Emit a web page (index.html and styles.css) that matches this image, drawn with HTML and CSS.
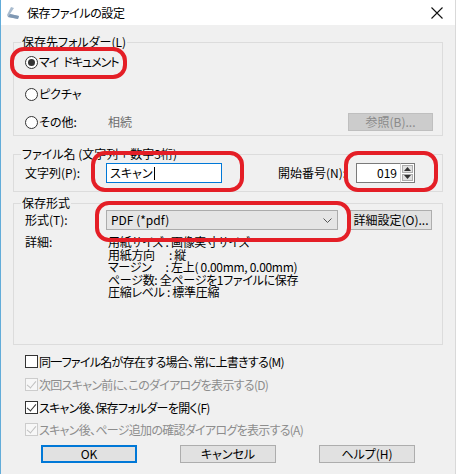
FILE: index.html
```html
<!DOCTYPE html>
<html lang="ja">
<head>
<meta charset="utf-8">
<title>保存ファイルの設定</title>
<link rel="stylesheet" href="styles.css">
</head>
<body>
<div class="window">
  <div class="titlebar">
    <svg class="app-icon" width="14" height="14" viewBox="0 0 14 14">
      <path d="M5 1 L8 2 L4 8 L13 10 L12 13 L2 11 L1 9 Z" fill="#a9bccf"/>
      <path d="M4 8 L13 10 L12 13 L2 11 Z" fill="#7f98b3"/>
    </svg>
    <span class="title">保存ファイルの設定</span>
    <svg class="close" width="12" height="12" viewBox="0 0 12 12">
      <path d="M0.5 0.5 L11.5 11.5 M11.5 0.5 L0.5 11.5" stroke="#111" stroke-width="1.1"/>
    </svg>
  </div>

  <div class="content">
    <fieldset class="group g1">
      <legend>保存先フォルダー(L)</legend>
      <div class="row r1"><span class="radio checked"></span><span class="mydoc">マイ<span class="gap"></span>ドキュメント</span></div>
      <div class="row r2"><span class="radio"></span><span>ピクチャ</span></div>
      <div class="row r3">
        <span class="radio"></span><span class="other">その他:</span><span class="path">相続</span>
        <span class="btn disabled browse">参照(B)...</span>
      </div>
    </fieldset>

    <fieldset class="group g2">
      <legend>ファイル名 (文字列 + 数字3桁)</legend>
      <div class="row">
        <span class="lbl">文字列(P):</span>
        <span class="textbox focused">スキャン<span class="caret"></span></span>
        <span class="lbl lbl-start">開始番号(N):</span>
        <span class="spin">
          <span class="spin-input">019</span>
          <span class="spin-btns">
            <span class="spin-btn"><svg width="7" height="4" viewBox="0 0 7 4"><path d="M0 4 L3.5 0 L7 4 Z" fill="#333"/></svg></span>
            <span class="spin-btn"><svg width="7" height="4" viewBox="0 0 7 4"><path d="M0 0 L3.5 4 L7 0 Z" fill="#333"/></svg></span>
          </span>
        </span>
      </div>
    </fieldset>

    <fieldset class="group g3">
      <legend>保存形式</legend>
      <div class="row">
        <span class="lbl">形式(T):</span>
        <span class="select">
          <span>PDF (*pdf)</span>
          <svg width="9" height="5" viewBox="0 0 9 5"><path d="M0.5 0.5 L4.5 4.5 L8.5 0.5" fill="none" stroke="#555" stroke-width="1"/></svg>
        </span>
        <span class="btn detail-btn">詳細設定(O)...</span>
      </div>
      <div class="details">
        <span class="lbl dlbl">詳細:</span>
        <div class="lines">
          <div>用紙サイズ : 画像実寸サイズ</div>
          <div>用紙方向　 : 縦</div>
          <div>マージン　 : 左上( 0.00mm, 0.00mm)</div>
          <div>ページ数: 全ページを1ファイルに保存</div>
          <div>圧縮レベル : 標準圧縮</div>
        </div>
      </div>
    </fieldset>

    <div class="checks">
      <div class="crow c1"><span class="check"></span><span>同一ファイル名が存在する場合、常に上書きする(M)</span></div>
      <div class="crow c2 dis"><span class="check on"></span><span>次回スキャン前に、このダイアログを表示する(D)</span></div>
      <div class="crow c3"><span class="check on"></span><span>スキャン後、保存フォルダーを開く(F)</span></div>
      <div class="crow c4 dis"><span class="check on"></span><span>スキャン後、ページ追加の確認ダイアログを表示する(A)</span></div>
    </div>

    <div class="buttons">
      <span class="btn main default">OK</span>
      <span class="btn main">キャンセル</span>
      <span class="btn main">ヘルプ(H)</span>
    </div>
  </div>

  <div class="mark m1"></div>
  <div class="mark m2"></div>
  <div class="mark m3"></div>
  <div class="mark m4"></div>
</div>
</body>
</html>
```

FILE: styles.css
```css
* { box-sizing: border-box; }
html, body { margin: 0; padding: 0; }
body {
  width: 456px;
  height: 474px;
  overflow: hidden;
  background: #f0f0f0;
  font-family: "Noto Sans CJK JP", "Noto Sans", sans-serif;
  font-size: 12px;
  line-height: 14px;
  color: #000;
  font-feature-settings: "palt";
}
.window {
  position: relative;
  width: 456px;
  height: 474px;
  border-left: 1px solid #62acd9;
  border-right: 1px solid #d9d9d9;
  background: #f0f0f0;
}
.titlebar {
  height: 25px;
  background: #fff;
  display: flex;
  align-items: center;
  padding-left: 5px;
}
.app-icon { margin-right: 7px; }
.title { font-size: 12px; letter-spacing: -0.4px; }
.close { margin-left: auto; margin-right: 12px; }

.content { padding: 0 12px 0 12px; }

.group {
  margin: 0;
  border: 1px solid #dcdcdc;
  padding: 0 9px 0 11px;
  min-width: 0;
}
.group legend {
  padding: 0 1px;
  margin-left: -4px;
  line-height: 14px;
  color: #000;
}
.g1 { margin-top: 10px; padding-bottom: 3px; }
.g2 { margin-top: 11px; padding-top: 2px; padding-bottom: 8px; }
.g3 { margin-top: 4px; padding-bottom: 45px; }

.row { display: flex; align-items: center; height: 20px; }
.g1 .r1 { margin-top: 3px; }
.g1 .r2 { margin-top: 12px; }
.g1 .r3 { margin-top: 8px; }

.mydoc { letter-spacing: -1px; display: inline-flex; align-items: center; }
.mydoc .gap { display: inline-block; width: 5px; }

.radio {
  width: 13px; height: 13px;
  border: 1px solid #333;
  border-radius: 50%;
  background: #fff;
  margin-right: 1px;
  display: flex; align-items: center; justify-content: center;
  flex: none;
}
.radio.checked::after {
  content: "";
  width: 7px; height: 7px;
  border-radius: 50%;
  background: #333;
}
.other { width: 69px; }
.path { color: #6d6d6d; }

.btn {
  display: flex; align-items: center; justify-content: center;
  background: #e1e1e1;
  border: 1px solid #adadad;
  height: 18px;
  white-space: nowrap;
}
.browse {
  margin-left: auto;
  width: 85px;
  height: 18px;
  background: #cccccc;
  border-color: #bfbfbf;
  color: #8a8a8a;
}

.lbl { width: 81px; flex: none; }
.textbox {
  width: 116px; height: 20px;
  background: #fff;
  border: 1px solid #7a7a7a;
  display: flex; align-items: center;
  padding-left: 3px;
}
.textbox.focused { border-color: #0078d7; }
.caret { width: 1px; height: 13px; background: #000; margin-left: 1px; }
.lbl-start { margin-left: 56px; width: 78px; }
.spin { display: flex; height: 20px; }
.spin-input {
  width: 44px; height: 20px;
  background: #fff;
  border: 1px solid #7a7a7a;
  border-right: none;
  text-align: right;
  padding-right: 3px;
  line-height: 18px;
}
.spin-btns {
  width: 15px; height: 20px;
  display: flex; flex-direction: column;
  border: 1px solid #7a7a7a;
  border-left: 1px solid #d0d0d0;
  background: #fff;
  padding: 1px;
  gap: 1px;
}
.spin-btn {
  flex: 1;
  background: #e1e1e1;
  border: 1px solid #adadad;
  display: flex; align-items: center; justify-content: center;
}

.select {
  width: 232px; height: 20px;
  background: #e5e5e5;
  border: 1px solid #acacac;
  display: flex; align-items: center; justify-content: space-between;
  padding: 0 5px 0 4px;
}
.detail-btn { margin-left: 12px; width: 82px; height: 20px; }

.details { display: flex; margin-top: 6px; line-height: 12.5px; }
.dlbl { width: 83px; }
.lines { letter-spacing: -0.3px; }
.lines div { white-space: pre; }

.checks { margin-top: 6px; padding-left: 12px; }
.crow { display: flex; align-items: center; height: 22px; letter-spacing: -0.7px; }
.c2, .c3 { margin-top: 1px; }
.check {
  width: 13px; height: 13px;
  border: 1px solid #333;
  background: #fff;
  margin-right: 1px;
  position: relative;
  flex: none;
}
.check.on::after {
  content: "";
  position: absolute;
  left: 3px; top: 0px;
  width: 4px; height: 8px;
  border-right: 1.5px solid #333;
  border-bottom: 1.5px solid #333;
  transform: rotate(40deg);
}
.dis { color: #8d8d8d; }
.dis .check { border-color: #cccccc; background: #f7f7f7; }
.dis .check.on::after { border-color: #c0c0c0; }

.buttons {
  display: flex;
  justify-content: center;
  gap: 43px;
  margin-top: 4px;
}
.btn.main { width: 96px; height: 18px; }
.btn.default { border: 2px solid #0078d7; }

.mark {
  position: absolute;
  border: 4px solid #e41e26;
  border-radius: 14px;
}
.m1 { left: 9px; top: 47px; width: 117px; height: 32px; }
.m2 { left: 90px; top: 151px; width: 153px; height: 41px; }
.m3 { left: 343px; top: 151px; width: 94px; height: 41px; }
.m4 { left: 94px; top: 201px; width: 256px; height: 41px; }
```
